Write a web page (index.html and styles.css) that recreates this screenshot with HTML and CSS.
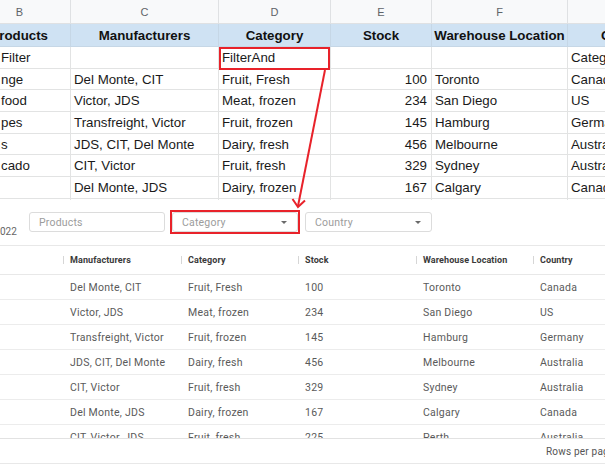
FILE: index.html
```html
<!DOCTYPE html>
<html>
<head>
<meta charset="utf-8">
<link rel="stylesheet" href="styles.css">
</head>
<body>
<div class="page">
  <div class="sheet">
    <div class="c let let-b">B</div><div class="c let">C</div><div class="c let">D</div><div class="c let">E</div><div class="c let">F</div><div class="c let">G</div>

    <div class="c hd hd-b">Products</div><div class="c hd">Manufacturers</div><div class="c hd">Category</div><div class="c hd">Stock</div><div class="c hd">Warehouse Location</div><div class="c hd">Country</div>

    <div class="c cb">Filter</div><div class="c"></div><div class="c">FilterAnd</div><div class="c"></div><div class="c"></div><div class="c">Category</div>

    <div class="c cb">nge</div><div class="c">Del Monte, CIT</div><div class="c">Fruit, Fresh</div><div class="c num">100</div><div class="c">Toronto</div><div class="c">Canada</div>

    <div class="c cb">food</div><div class="c">Victor, JDS</div><div class="c">Meat, frozen</div><div class="c num">234</div><div class="c">San Diego</div><div class="c">US</div>

    <div class="c cb">pes</div><div class="c">Transfreight, Victor</div><div class="c">Fruit, frozen</div><div class="c num">145</div><div class="c">Hamburg</div><div class="c">Germany</div>

    <div class="c cb">s</div><div class="c">JDS, CIT, Del Monte</div><div class="c">Dairy, fresh</div><div class="c num">456</div><div class="c">Melbourne</div><div class="c">Australia</div>

    <div class="c cb">cado</div><div class="c">CIT, Victor</div><div class="c">Fruit, fresh</div><div class="c num">329</div><div class="c">Sydney</div><div class="c">Australia</div>

    <div class="c cb"></div><div class="c">Del Monte, JDS</div><div class="c">Dairy, frozen</div><div class="c num">167</div><div class="c">Calgary</div><div class="c">Canada</div>

    <div class="c cb"></div><div class="c"></div><div class="c"></div><div class="c"></div><div class="c"></div><div class="c"></div>
  </div>

  <div class="app">
    <div class="toolbar">
      <div class="title">022</div>
      <div class="field f-products">Products</div>
      <div class="field f-cat">Category<span class="caret"></span></div>
      <div class="field f-country">Country<span class="caret"></span></div>
    </div>

    <div class="trow thead">
      <div class="th"></div>
      <div class="th sep">Manufacturers</div>
      <div class="th sep">Category</div>
      <div class="th sep">Stock</div>
      <div class="th sep">Warehouse Location</div>
      <div class="th sep">Country</div>
    </div>

    <div class="tbody">
      <div class="trow tr"><div class="td"></div><div class="td">Del Monte, CIT</div><div class="td">Fruit, Fresh</div><div class="td">100</div><div class="td">Toronto</div><div class="td">Canada</div></div>
      <div class="trow tr"><div class="td"></div><div class="td">Victor, JDS</div><div class="td">Meat, frozen</div><div class="td">234</div><div class="td">San Diego</div><div class="td">US</div></div>
      <div class="trow tr"><div class="td"></div><div class="td">Transfreight, Victor</div><div class="td">Fruit, frozen</div><div class="td">145</div><div class="td">Hamburg</div><div class="td">Germany</div></div>
      <div class="trow tr"><div class="td"></div><div class="td">JDS, CIT, Del Monte</div><div class="td">Dairy, fresh</div><div class="td">456</div><div class="td">Melbourne</div><div class="td">Australia</div></div>
      <div class="trow tr"><div class="td"></div><div class="td">CIT, Victor</div><div class="td">Fruit, fresh</div><div class="td">329</div><div class="td">Sydney</div><div class="td">Australia</div></div>
      <div class="trow tr"><div class="td"></div><div class="td">Del Monte, JDS</div><div class="td">Dairy, frozen</div><div class="td">167</div><div class="td">Calgary</div><div class="td">Canada</div></div>
      <div class="trow tr"><div class="td"></div><div class="td">CIT, Victor, JDS</div><div class="td">Fruit, fresh</div><div class="td">225</div><div class="td">Perth</div><div class="td">Australia</div></div>
    </div>

    <div class="footer">Rows per page</div>
  </div>

  <svg class="annot" width="605" height="465" viewBox="0 0 605 465">
    <rect x="220" y="48" width="109" height="21" fill="none" stroke="#e8222a" stroke-width="2"/>
    <rect x="171" y="211" width="128" height="22" fill="none" stroke="#e8222a" stroke-width="2"/>
    <line x1="325" y1="70" x2="298" y2="206" stroke="#e8222a" stroke-width="2"/>
    <polyline points="292.5,199 298,207 305,200.5" fill="none" stroke="#e8222a" stroke-width="2" stroke-linejoin="miter"/>
  </svg>
</div>
</body>
</html>
```

FILE: styles.css
```css
* { box-sizing: border-box; }

html, body {
  margin: 0;
  padding: 0;
  background: #fff;
}

.page {
  position: relative;
  width: 605px;
  height: 465px;
  overflow: hidden;
  background: #fff;
}

/* ---------- spreadsheet ---------- */
.sheet {
  display: grid;
  grid-template-columns: 71px 148px 112px 101px 136px 118px;
  grid-template-rows: 24px 23px repeat(8, 21.7px);
  width: 686px;
  height: 200px;
  overflow: hidden;
  font-family: "Liberation Sans", Arial, sans-serif;
  font-size: 13.3px;
  color: #1a1a1a;
}

.c {
  display: flex;
  align-items: center;
  min-width: 0;
  padding: 0 3px;
  white-space: nowrap;
  overflow: hidden;
  border-right: 1px solid #e2e3e3;
  border-bottom: 1px solid #e2e3e3;
}

.cb { padding-left: 1px; }

.let {
  justify-content: center;
  background: #f8f9fa;
  color: #5f6368;
  font-size: 11px;
  border-color: #dfe1e3;
}

.let-b {
  justify-content: flex-end;
  padding-right: 47px;
}

.hd {
  justify-content: center;
  background: #cfe2f3;
  font-weight: bold;
  color: #111;
  border-color: #c6d7e6;
}

.hd-b {
  justify-content: flex-end;
  padding-right: 22px;
}

.num {
  justify-content: flex-end;
  padding-right: 4px;
}

/* ---------- app ---------- */
.app {
  font-family: Roboto, "Noto Sans", sans-serif;
  color: #555;
}

.toolbar {
  display: flex;
  align-items: flex-start;
  gap: 7px;
  height: 46px;
  padding-top: 12px;
  border-bottom: 1px solid #e8e8e8;
}

.title {
  width: 22px;
  margin-top: 14px;
  font-size: 10px;
  line-height: 12px;
  color: #666;
  overflow: hidden;
}

.field {
  display: flex;
  align-items: center;
  justify-content: space-between;
  height: 20px;
  padding: 0 10px 0 9px;
  border: 1px solid #dcdcdc;
  border-radius: 3px;
  font-size: 10.5px;
  letter-spacing: 0.2px;
  color: #9c9c9c;
  background: #fff;
}

.f-products { width: 136px; }
.f-cat { width: 126px; }
.f-country { width: 127px; }

.caret {
  width: 0;
  height: 0;
  border-left: 3px solid transparent;
  border-right: 3px solid transparent;
  border-top: 3px solid #6a6a6a;
}

.trow {
  display: grid;
  grid-template-columns: 63px 118px 117px 118px 117px 118px;
  align-items: center;
}

.thead {
  height: 29px;
  border-bottom: 1px solid #e8e8e8;
  font-size: 9px;
  font-weight: 700;
  color: #3a3a3a;
  letter-spacing: 0.1px;
}

.th {
  display: flex;
  align-items: center;
  white-space: nowrap;
}

.th.sep::before {
  content: "";
  width: 1px;
  height: 8px;
  margin-right: 6px;
  background: #d6d6d6;
}

.tbody {
  height: 163px;
  overflow: hidden;
}

.tr {
  height: 25px;
  border-bottom: 1px solid #ececec;
  font-size: 10.5px;
  letter-spacing: 0.25px;
  color: #5a5a5a;
}

.td {
  padding-left: 7px;
  white-space: nowrap;
  overflow: hidden;
}

.footer {
  display: flex;
  align-items: center;
  height: 26px;
  padding-left: 546px;
  border-top: 1px solid #e2e2e2;
  border-bottom: 1px solid #e8e8e8;
  font-size: 10px;
  letter-spacing: 0.2px;
  color: #555;
  white-space: nowrap;
}

/* ---------- annotation overlay ---------- */
.annot {
  position: absolute;
  left: 0;
  top: 0;
  pointer-events: none;
}
```
